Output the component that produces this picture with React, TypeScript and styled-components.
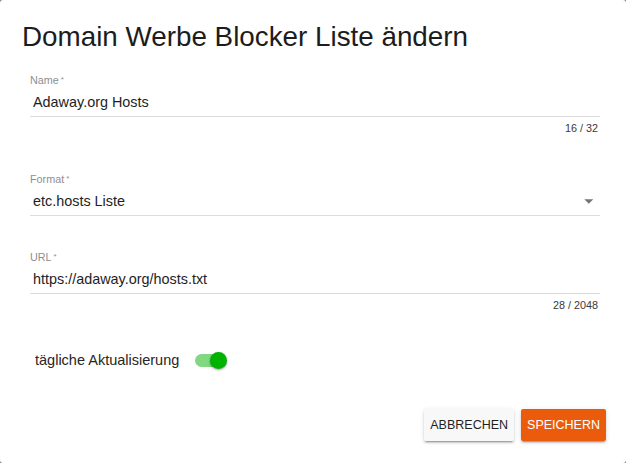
import React from "react";
import styled, { createGlobalStyle } from "styled-components";

const GlobalStyle = createGlobalStyle`
  html, body {
    margin: 0;
    padding: 0;
    background: #7d7d7d;
  }
  * { box-sizing: border-box; }
  body {
    font-family: "Liberation Sans", Arial, Helvetica, sans-serif;
    -webkit-font-smoothing: antialiased;
  }
`;

const Dialog = styled.div`
  width: 626px;
  height: 463px;
  background: #ffffff;
  border-radius: 3px;
  display: flex;
  flex-direction: column;
  overflow: hidden;
`;

const Title = styled.h2`
  margin: 0;
  padding: 21px 22px 0 22px;
  font-size: 27.8px;
  line-height: 32px;
  font-weight: 400;
  color: #1c1c1c;
  letter-spacing: 0;
`;

const Content = styled.div`
  flex: 1;
  display: flex;
  flex-direction: column;
  gap: 35px;
  padding: 21px 26px 0 30px;
`;

const Field = styled.div`
  display: flex;
  flex-direction: column;
`;

const Label = styled.label`
  display: block;
  height: 13px;
  font-size: 10.8px;
  line-height: 13px;
  color: #8f8f8f;
  margin-bottom: 6px;
`;

const Req = styled.span`
  font-size: 8px;
  line-height: 0;
  vertical-align: 2px;
  margin-left: 2px;
`;

const InputRow = styled.div`
  display: flex;
  align-items: center;
  padding: 0 0 5px 3px;
  border-bottom: 1px solid #dcdcdc;
`;

const Value = styled.span`
  flex: 1;
  font-size: 14.4px;
  line-height: 18px;
  color: #1e1e1e;
`;

const Arrow = styled.svg`
  width: 21.6px;
  height: 18px;
  fill: #757575;
  flex: none;
`;

const Helper = styled.div`
  align-self: flex-end;
  font-size: 10.8px;
  line-height: 13px;
  color: #3a3a3a;
  margin: 5px 2px 3px 0;
`;

const ToggleRow = styled.div`
  display: flex;
  align-items: center;
  gap: 16px;
  padding-left: 5px;
  height: 20px;
`;

const ToggleText = styled.span`
  font-size: 14.5px;
  line-height: 18px;
  color: #262626;
`;

const SwitchRoot = styled.span`
  position: relative;
  display: inline-block;
  width: 32px;
  height: 18px;
`;

const Track = styled.span<{ $on: boolean }>`
  position: absolute;
  left: 0;
  top: 2.5px;
  width: 30px;
  height: 13px;
  border-radius: 7px;
  background: ${(p) => (p.$on ? "#80d880" : "#bdbdbd")};
`;

const Thumb = styled.span<{ $on: boolean }>`
  position: absolute;
  top: 0.5px;
  left: ${(p) => (p.$on ? "15px" : "0px")};
  width: 17px;
  height: 17px;
  border-radius: 50%;
  background: ${(p) => (p.$on ? "#00b300" : "#fafafa")};
  box-shadow: 0 1px 2px rgba(0, 0, 0, 0.25), 0 1px 3px rgba(0, 0, 0, 0.15);
`;

const Actions = styled.div`
  display: flex;
  justify-content: flex-end;
  gap: 7px;
  padding: 0 20px 22px 0;
`;

const Button = styled.button<{ $primary?: boolean }>`
  height: 32px;
  padding: 0 6px;
  border: none;
  border-radius: 2px;
  font-family: "Liberation Sans", Arial, Helvetica, sans-serif;
  font-size: 12.5px;
  font-weight: 400;
  letter-spacing: 0;
  text-transform: uppercase;
  cursor: pointer;
  color: ${(p) => (p.$primary ? "#ffffff" : "#1f1f1f")};
  background: ${(p) => (p.$primary ? "#eb5b0c" : "#f8f8f8")};
  box-shadow: 0 3px 1px -2px rgba(0, 0, 0, 0.2), 0 2px 2px 0 rgba(0, 0, 0, 0.14),
    0 1px 5px 0 rgba(0, 0, 0, 0.12);
`;

type FieldProps = {
  label: string;
  value: string;
  helper?: string;
  select?: boolean;
};

function TextField({ label, value, helper, select }: FieldProps) {
  return (
    <Field>
      <Label>
        {label}
        <Req>*</Req>
      </Label>
      <InputRow>
        <Value>{value}</Value>
        {select && (
          <Arrow viewBox="0 0 24 20">
            <path d="M7 8l5 5 5-5z" />
          </Arrow>
        )}
      </InputRow>
      {helper && <Helper>{helper}</Helper>}
    </Field>
  );
}

function Switch({ on }: { on: boolean }) {
  return (
    <SwitchRoot>
      <Track $on={on} />
      <Thumb $on={on} />
    </SwitchRoot>
  );
}

export default function App() {
  return (
    <>
      <GlobalStyle />
      <Dialog>
        <Title>Domain Werbe Blocker Liste ändern</Title>
        <Content>
          <TextField label="Name" value="Adaway.org Hosts" helper="16 / 32" />
          <TextField label="Format" value="etc.hosts Liste" select />
          <TextField
            label="URL"
            value="https://adaway.org/hosts.txt"
            helper="28 / 2048"
          />
          <ToggleRow>
            <ToggleText>tägliche Aktualisierung</ToggleText>
            <Switch on />
          </ToggleRow>
        </Content>
        <Actions>
          <Button>Abbrechen</Button>
          <Button $primary>Speichern</Button>
        </Actions>
      </Dialog>
    </>
  );
}
